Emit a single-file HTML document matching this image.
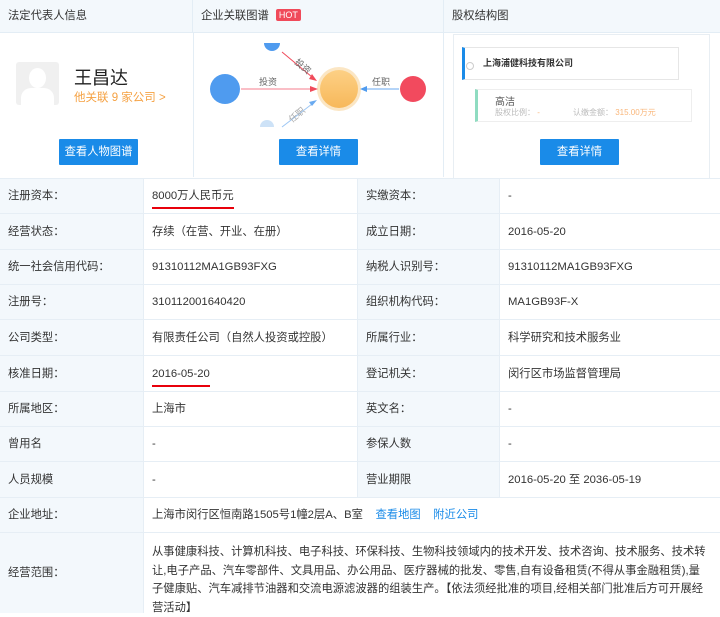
<!DOCTYPE html>
<html><head><meta charset="utf-8"><style>
*{margin:0;padding:0;box-sizing:border-box}
body{width:720px;height:609px;overflow:hidden;background:#fff;font-family:"Liberation Sans","Noto Sans CJK SC",sans-serif;font-size:11.3px;color:#333;position:relative}
.hd{position:absolute;top:0;height:33px;background:#f3f8fc;border-bottom:1px solid #e3edf5;line-height:32px;padding-left:8px;font-size:11.3px;color:#333}
.pan{position:absolute;top:33px;height:144px;border-right:1px solid #e3edf5}
.btn{position:absolute;width:79px;height:26px;background:#1a8be8;color:#fff;text-align:center;line-height:26px;font-size:11.3px;border-radius:1px}
.row{position:absolute;left:0;width:720px;border-bottom:1px solid #e6eef5}
.c{position:absolute;top:0;bottom:0;padding-left:8px;display:flex;align-items:center;font-size:11.3px;line-height:16px;border-right:1px solid #e6eef5}
.l{background:#f3f8fc}
a{color:#1a8be8;text-decoration:none}
.u{position:relative}
.u:after{content:"";position:absolute;left:0;right:0;bottom:-5px;height:2px;background:#e8000b}
</style></head><body>
<div class="hd" style="left:0;width:193px;border-right:1px solid #e3edf5">法定代表人信息</div>
<div class="hd" style="left:193px;width:251px;border-right:1px solid #e3edf5">企业关联图谱 <span style="display:inline-block;background:#f04a5a;color:#fff;font-size:9px;line-height:12px;padding:0 3px;border-radius:2px;vertical-align:1px;margin-left:4px">HOT</span></div>
<div class="hd" style="left:444px;width:276px">股权结构图</div>

<div class="pan" style="left:0;width:194px">
 <div style="position:absolute;left:16px;top:29px;width:43px;height:43px;background:#f0f0f0;border-radius:3px;overflow:hidden">
  <div style="position:absolute;left:13px;top:6px;width:17px;height:20px;background:#fff;border-radius:50%"></div>
  <div style="position:absolute;left:5px;top:26px;width:33px;height:24px;background:#fff;border-radius:10px 10px 0 0"></div>
 </div>
 <div style="position:absolute;left:74px;top:31px;font-size:18px;color:#222">王昌达</div>
 <div style="position:absolute;left:74px;top:56px;font-size:11.5px;color:#f5a142">他关联 9 家公司 &gt;</div>
 <div class="btn" style="left:59px;top:106px">查看人物图谱</div>
</div>
<div class="pan" style="left:194px;width:250px">
 <svg width="250" height="95" style="position:absolute;left:0;top:10px">
  <defs><linearGradient id="g" x1="0" y1="0" x2="0" y2="1"><stop offset="0" stop-color="#fdd085"/><stop offset="1" stop-color="#f7b85a"/></linearGradient></defs>
  <path d="M70 0 a8 8 0 0 0 16 0z" fill="#4f9bef"/>
  <path d="M66 84 a7 7 0 0 1 14 0z" fill="#cde2f7"/>
  <circle cx="31" cy="46" r="15" fill="#4f9bef"/>
  <circle cx="145" cy="46" r="22" fill="#fbe6c4"/>
  <circle cx="145" cy="46" r="19" fill="url(#g)"/>
  <circle cx="219" cy="46" r="13" fill="#f24a5e"/>
  <line x1="47" y1="46" x2="118" y2="46" stroke="#f47d8c" stroke-width="1"/><path d="M124 46 l-8 -3 v6z" fill="#f04a5a"/>
  <line x1="88" y1="9" x2="118" y2="34" stroke="#f04a5a" stroke-width="1"/><path d="M123 38 l-8 -2 l3 -5z" fill="#f04a5a"/>
  <line x1="88" y1="84" x2="118" y2="61" stroke="#9cc6f4" stroke-width="1"/><path d="M123 57 l-8 2 l3 4z" fill="#6aaaf0"/>
  <line x1="168" y1="46" x2="205" y2="46" stroke="#6aaaf0" stroke-width="1"/><path d="M166 46 l7 -3 v6z" fill="#4f9bef"/>
  <text x="65" y="42" font-size="9" fill="#666">投资</text>
  <text x="100" y="20" font-size="9" fill="#666" transform="rotate(40 100 20)">投资</text>
  <text x="98" y="80" font-size="9" fill="#aaa" transform="rotate(-40 98 80)">任职</text>
  <text x="178" y="42" font-size="9" fill="#666">任职</text>
 </svg>
 <div class="btn" style="left:85px;top:106px">查看详情</div>
</div>
<div class="pan" style="left:444px;width:276px;border-right:none">
 <div style="position:absolute;left:9px;top:1px;width:257px;height:144px;border:1px solid #e8eef3;border-bottom:none"></div>
 <div style="position:absolute;left:18px;top:14px;width:217px;height:33px;border:1px solid #e6e6e6;border-left:3px solid #1a8be8;font-size:9px;line-height:31px;padding-left:18px;font-weight:bold;color:#333">上海浦健科技有限公司</div>
 <div style="position:absolute;left:22px;top:29px;width:8px;height:8px;border:1px solid #ccc;border-radius:50%"></div>
 <div style="position:absolute;left:31px;top:56px;width:217px;height:33px;border:1px solid #eee;border-left:3px solid #8fdcc1">
  <div style="position:absolute;left:17px;top:3px;font-size:10px;color:#555">高洁</div>
  <div style="position:absolute;left:17px;top:17px;font-size:8px;color:#bbb">股权比例： <span style="color:#f9b67a">-</span></div>
  <div style="position:absolute;left:95px;top:17px;font-size:8px;color:#bbb">认缴金额： <span style="color:#f9b67a">315.00万元</span></div>
 </div>
 <div class="btn" style="left:96px;top:106px">查看详情</div>
</div>

<div style="position:absolute;left:0;top:178px;width:720px;height:1px;background:#e6eef5"></div>
<div class="row" style="top:179px;height:35px"><div class="c l" style="left:0;width:144px">注册资本：</div><div class="c" style="left:144px;width:214px"><span class="u">8000万人民币元</span></div><div class="c l" style="left:358px;width:142px">实缴资本：</div><div class="c" style="left:500px;width:220px;border:0">-</div></div>
<div class="row" style="top:214px;height:36px"><div class="c l" style="left:0;width:144px">经营状态：</div><div class="c" style="left:144px;width:214px">存续（在营、开业、在册）</div><div class="c l" style="left:358px;width:142px">成立日期：</div><div class="c" style="left:500px;width:220px;border:0">2016-05-20</div></div>
<div class="row" style="top:250px;height:35px"><div class="c l" style="left:0;width:144px">统一社会信用代码：</div><div class="c" style="left:144px;width:214px">91310112MA1GB93FXG</div><div class="c l" style="left:358px;width:142px">纳税人识别号：</div><div class="c" style="left:500px;width:220px;border:0">91310112MA1GB93FXG</div></div>
<div class="row" style="top:285px;height:35px"><div class="c l" style="left:0;width:144px">注册号：</div><div class="c" style="left:144px;width:214px">310112001640420</div><div class="c l" style="left:358px;width:142px">组织机构代码：</div><div class="c" style="left:500px;width:220px;border:0">MA1GB93F-X</div></div>
<div class="row" style="top:320px;height:36px"><div class="c l" style="left:0;width:144px">公司类型：</div><div class="c" style="left:144px;width:214px">有限责任公司（自然人投资或控股）</div><div class="c l" style="left:358px;width:142px">所属行业：</div><div class="c" style="left:500px;width:220px;border:0">科学研究和技术服务业</div></div>
<div class="row" style="top:356px;height:36px"><div class="c l" style="left:0;width:144px">核准日期：</div><div class="c" style="left:144px;width:214px"><span class="u">2016-05-20</span></div><div class="c l" style="left:358px;width:142px">登记机关：</div><div class="c" style="left:500px;width:220px;border:0">闵行区市场监督管理局</div></div>
<div class="row" style="top:392px;height:35px"><div class="c l" style="left:0;width:144px">所属地区：</div><div class="c" style="left:144px;width:214px">上海市</div><div class="c l" style="left:358px;width:142px">英文名：</div><div class="c" style="left:500px;width:220px;border:0">-</div></div>
<div class="row" style="top:427px;height:35px"><div class="c l" style="left:0;width:144px">曾用名</div><div class="c" style="left:144px;width:214px">-</div><div class="c l" style="left:358px;width:142px">参保人数</div><div class="c" style="left:500px;width:220px;border:0">-</div></div>
<div class="row" style="top:462px;height:36px"><div class="c l" style="left:0;width:144px">人员规模</div><div class="c" style="left:144px;width:214px">-</div><div class="c l" style="left:358px;width:142px">营业期限</div><div class="c" style="left:500px;width:220px;border:0">2016-05-20 至 2036-05-19</div></div>
<div class="row" style="top:498px;height:35px"><div class="c l" style="left:0;width:144px">企业地址：</div><div class="c" style="left:144px;width:576px;border:0">上海市闵行区恒南路1505号1幢2层A、B室&nbsp;&nbsp;&nbsp;&nbsp;<a>查看地图</a>&nbsp;&nbsp;&nbsp;&nbsp;<a>附近公司</a></div></div>
<div class="row" style="top:533px;height:80px;border:0"><div class="c l" style="left:0;width:144px">经营范围：</div><div class="c" style="left:144px;width:576px;border:0;align-items:flex-start;padding-top:10px;padding-right:12px;line-height:18.5px;font-size:11.3px">从事健康科技、计算机科技、电子科技、环保科技、生物科技领域内的技术开发、技术咨询、技术服务、技术转让,电子产品、汽车零部件、文具用品、办公用品、医疗器械的批发、零售,自有设备租赁(不得从事金融租赁),量子健康贴、汽车减排节油器和交流电源滤波器的组装生产。【依法须经批准的项目,经相关部门批准后方可开展经营活动】</div></div>
</body></html>
